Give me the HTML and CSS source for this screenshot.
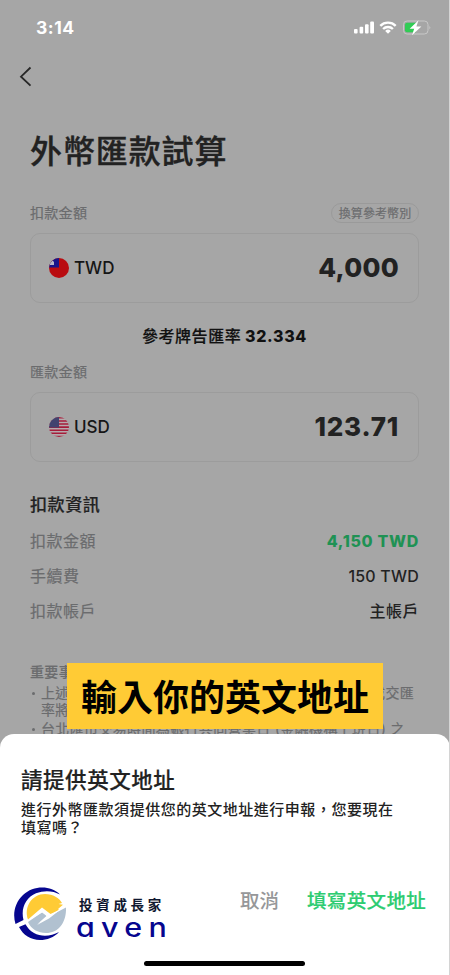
FILE: index.html
```html
<!DOCTYPE html>
<html lang="zh-Hant">
<head>
<meta charset="utf-8">
<title>外幣匯款試算</title>
<link rel="stylesheet" href="styles.css">
</head>
<body>
<div class="screen">
  <header class="status">
    <span class="time">3:14</span>
    <svg class="status-icons" width="80" height="18" viewBox="0 0 80 18">
      <g fill="#fff">
        <rect x="1" y="11" width="3.6" height="4.5" rx="1"/>
        <rect x="6.6" y="8.7" width="3.6" height="6.8" rx="1"/>
        <rect x="12" y="6.2" width="3.6" height="9.3" rx="1"/>
        <rect x="17.2" y="3.5" width="3.8" height="12" rx="1"/>
        <path d="M35 15.8l-2.8-2.9a4 4 0 0 1 5.6 0z"/>
      </g>
      <g fill="none" stroke="#fff" stroke-width="2.4">
        <path d="M27.3 7.8a11 11 0 0 1 15.4 0"/>
        <path d="M30.1 11a7 7 0 0 1 9.8 0"/>
      </g>
      <rect x="50.5" y="3" width="24.500" height="13" rx="3.6" fill="none" stroke="#c8c8c8"/>
      <path d="M76.500 7.700q1.800 1.800 0 3.900z" fill="#d0d0d0"/>
      <path d="M54 4.800h9v9.400h-9q-2 0-2-2V6.800q0-2 2-2z" fill="#31cc55"/>
      <path d="M65.500 2.300l-8.800 8.400h4.500l-2.200 6.500 9.400-8.700h-5z" fill="#fff"/>
    </svg>
  </header>
  <nav class="nav">
    <svg width="14" height="22" viewBox="0 0 14 22"><path d="M11.500 1.500L2 10.700l9.500 9" fill="none" stroke="#272727" stroke-width="1.800"/></svg>
  </nav>
  <main class="content">
    <h1 class="title">外幣匯款試算</h1>
    <div class="label-row"><span>扣款金額</span><span class="pill">換算參考幣別</span></div>
    <div class="amount">
      <svg class="flag" width="20" height="20" viewBox="0 0 20 20">
        <clipPath id="c1"><circle cx="10" cy="10" r="10"/></clipPath>
        <g clip-path="url(#c1)"><path fill="#b90c10" d="M0 0h20v20H0z"/><path fill="#18148a" d="M0 0h10v9.500H0z"/><path d="M1 7V4.500L3.500 2.500 5 4v3z" fill="#b4b4c8"/></g>
      </svg>
      <span class="code">TWD</span><span class="value">4,000</span>
    </div>
    <p class="rate">參考牌告匯率 <b>32.334</b></p>
    <div class="label-row second"><span>匯款金額</span></div>
    <div class="amount">
      <svg class="flag" width="20" height="20" viewBox="0 0 20 20">
        <clipPath id="c2"><circle cx="10" cy="10" r="10"/></clipPath>
        <g clip-path="url(#c2)"><path fill="#b5aaad" d="M0 0h20v20H0z"/><path stroke="#a51c3a" stroke-width="1.550" d="M0 .8h20M0 3.900h20M0 7h20M0 10.100h20M0 13.200h20M0 16.300h20M0 19.400h20"/><path fill="#42436f" d="M0 0h10v10.500H0z"/></g>
      </svg>
      <span class="code">USD</span><span class="value wide">123.71</span>
    </div>
    <h2 class="subtitle">扣款資訊</h2>
    <dl class="info">
      <div class="info-row"><dt>扣款金額</dt><dd class="total">4,150 TWD</dd></div>
      <div class="info-row"><dt>手續費</dt><dd>150 TWD</dd></div>
      <div class="info-row"><dt>扣款帳戶</dt><dd class="cjk">主帳戶</dd></div>
    </dl>
    <section class="notes">
      <h3>重要事項</h3>
      <ul>
        <li>上述匯率及金額僅供試算參考，實際匯率將以當下之成交匯<br>率將為準</li>
        <li>台北匯市交易時間為銀行共同營業日 (金融機構上班日) 之</li>
      </ul>
    </section>
  </main>
  <div class="banner">輸入你的英文地址</div>
  <section class="sheet">
    <h2>請提供英文地址</h2>
    <p>進行外幣匯款須提供您的英文地址進行申報，您要現在<br>填寫嗎？</p>
    <footer class="actions">
      <div class="brand">
        <svg width="52" height="54" viewBox="0 0 52 54">
          <path d="M46 7.500C37-1.500 20-2.200 9 8 .5 16-1.500 27.500 1.500 37l8-4C6.500 21 12 10.500 22 6.300c8-3.200 17-2.800 24 1.200z" fill="#06068f"/>
          <path d="M5 40c4 8 12 13 21 13 7 0 14-2.500 19-8-8 4.500-18 5-25 1-4-2.300-6.500-5-8.500-8.700z" fill="#06068f"/>
          <path d="M14 32.500C9.500 20 18 7 31 7c8 0 14.500 4 17 9l-3.500 1 4.500.8-5 4.200 1 1-8.500 4-8.500-6.500z" fill="#ffcb35"/>
          <path d="M14 35l14.500-10 4 4-9 8 15-9.500L52 20.500C52.500 35 45 46 32 46c-8 0-15-4-18-11z" fill="#b1c1d0"/>
          <path d="M13 34.500L28 22.500l8 6L51 19 35 31.500 23 38l10-9-5-3.500z" fill="#fff"/>
        </svg>
        <div class="brand-text"><span class="brand-name">投資成長家</span><span class="brand-word">aven</span></div>
      </div>
      <span class="cancel">取消</span>
      <span class="confirm">填寫英文地址</span>
    </footer>
    <div class="home"></div>
  </section>
</div>
</body>
</html>
```
FILE: styles.css
```css
* { box-sizing: border-box; margin: 0; padding: 0; }
body { width: 450px; height: 975px; overflow: hidden; background: #d4d4d4; font-family: Inter, "Noto Sans CJK TC", sans-serif; color: #222; }
.screen { position: relative; width: 449px; height: 975px; overflow: hidden; background: #a6a6a6; }
.status { height: 54px; padding: 17px 16px 0 36px; display: flex; justify-content: space-between; }
.time { font-size: 17.5px; line-height: 21px; font-weight: 700; letter-spacing: .5px; color: #fff; }
.status-icons { margin-top: 1px; }
.nav { height: 54px; padding: 12px 0 0 19px; }
.nav svg { display: block; }
.content { padding: 0 30px; }
.title { height: 94px; padding-top: 20px; font-size: 32px; line-height: 48px; letter-spacing: .9px; font-weight: 500; -webkit-text-stroke: .35px; }
.label-row { height: 31px; padding-top: 1px; display: flex; justify-content: space-between; align-items: flex-start; font-size: 14px; line-height: 20px; letter-spacing: .3px; color: #6b6c6e; -webkit-text-stroke: .2px; }
.pill { height: 20px; width: 88px; border: 1px solid #9a9a9a; border-radius: 10px; font-size: 12px; line-height: 19px; letter-spacing: .1px; text-align: center; }
.amount { height: 70px; border: 1px solid #9c9c9c; border-radius: 10px; padding: 0 19px 1px 18px; display: flex; align-items: center; }
.flag { margin-right: 5px; }
.code { font-size: 17px; font-weight: 500; color: #161616; }
.value { margin-left: auto; font-size: 26px; font-weight: 800; letter-spacing: .3px; }
.wide { letter-spacing: .8px; }
.rate { height: 57px; padding-top: 21px; line-height: 24px; text-align: center; font-size: 16px; letter-spacing: .55px; font-weight: 500; color: #111; white-space: pre; -webkit-text-stroke: .2px; }
.rate b { font-weight: 800; letter-spacing: .65px; margin-left: -1px; -webkit-text-stroke: 0; }
.second { height: 32px; padding-top: 2px; }
.subtitle { height: 61px; padding-top: 31px; font-size: 17px; line-height: 24px; letter-spacing: .6px; font-weight: 500; -webkit-text-stroke: .2px; }
.info-row { height: 35px; display: flex; justify-content: space-between; align-items: center; font-size: 16px; line-height: 24px; }
.info-row dt { color: #6b6c6e; letter-spacing: .5px; -webkit-text-stroke: .2px; }
.info-row dd { font-weight: 500; letter-spacing: .2px; }
.info-row .cjk { letter-spacing: .5px; }
.info-row .total { font-weight: 800; color: #1f9254; letter-spacing: .7px; }
.notes { padding-top: 34px; font-size: 14px; line-height: 17px; letter-spacing: .35px; color: #6b6c6e; white-space: nowrap; -webkit-text-stroke: .2px; }
.notes h3 { font-size: 14px; font-weight: 500; line-height: 20px; margin-bottom: 2px; }
.notes ul { list-style: none; }
.notes li { padding-left: 11px; margin-bottom: 2px; position: relative; }
.notes li::before { content: ""; position: absolute; left: 2px; top: 8px; width: 3px; height: 3px; border-radius: 50%; background: #6b6c6e; }
.banner { position: absolute; left: 67px; top: 663px; width: 316px; height: 66px; background: #ffcb35; color: #000; font-size: 36px; line-height: 70px; font-weight: 700; text-align: center; }
.sheet { position: absolute; left: 0; top: 734px; width: 450px; height: 241px; border-radius: 14px 14px 0 0; background: #fff; padding: 30px 21px 0; }
.sheet h2 { font-size: 21.5px; line-height: 32px; letter-spacing: .55px; font-weight: 500; -webkit-text-stroke: .2px; }
.sheet p { margin-top: 5px; font-size: 15px; line-height: 18px; letter-spacing: .52px; font-weight: 500; white-space: nowrap; }
.actions { display: flex; margin: 50px 0 0 -7px; height: 54px; font-size: 19.5px; line-height: 28px; white-space: nowrap; }
.brand { display: flex; width: 226px; }
.brand-text { display: flex; flex-direction: column; padding: 10px 0 0 13px; color: #101830; }
.brand-name { font-size: 13.5px; line-height: 17px; letter-spacing: 3.7px; font-weight: 700; }
.brand-word { font-size: 26px; line-height: 25px; height: 25px; font-weight: 500; color: #06068f; letter-spacing: 5.4px; font-feature-settings: "cv11"; transform: scaleX(1.17); transform-origin: left; margin: 1px 0 0 -3px; }
.cancel { color: #969799; width: 67px; font-weight: 500; }
.confirm { color: #2dcc71; font-weight: 500; letter-spacing: .35px; -webkit-text-stroke: .2px; }
.home { margin: 20px auto 0; width: 161px; height: 5px; border-radius: 3px; background: #000; position: relative; left: -1px; }
```
